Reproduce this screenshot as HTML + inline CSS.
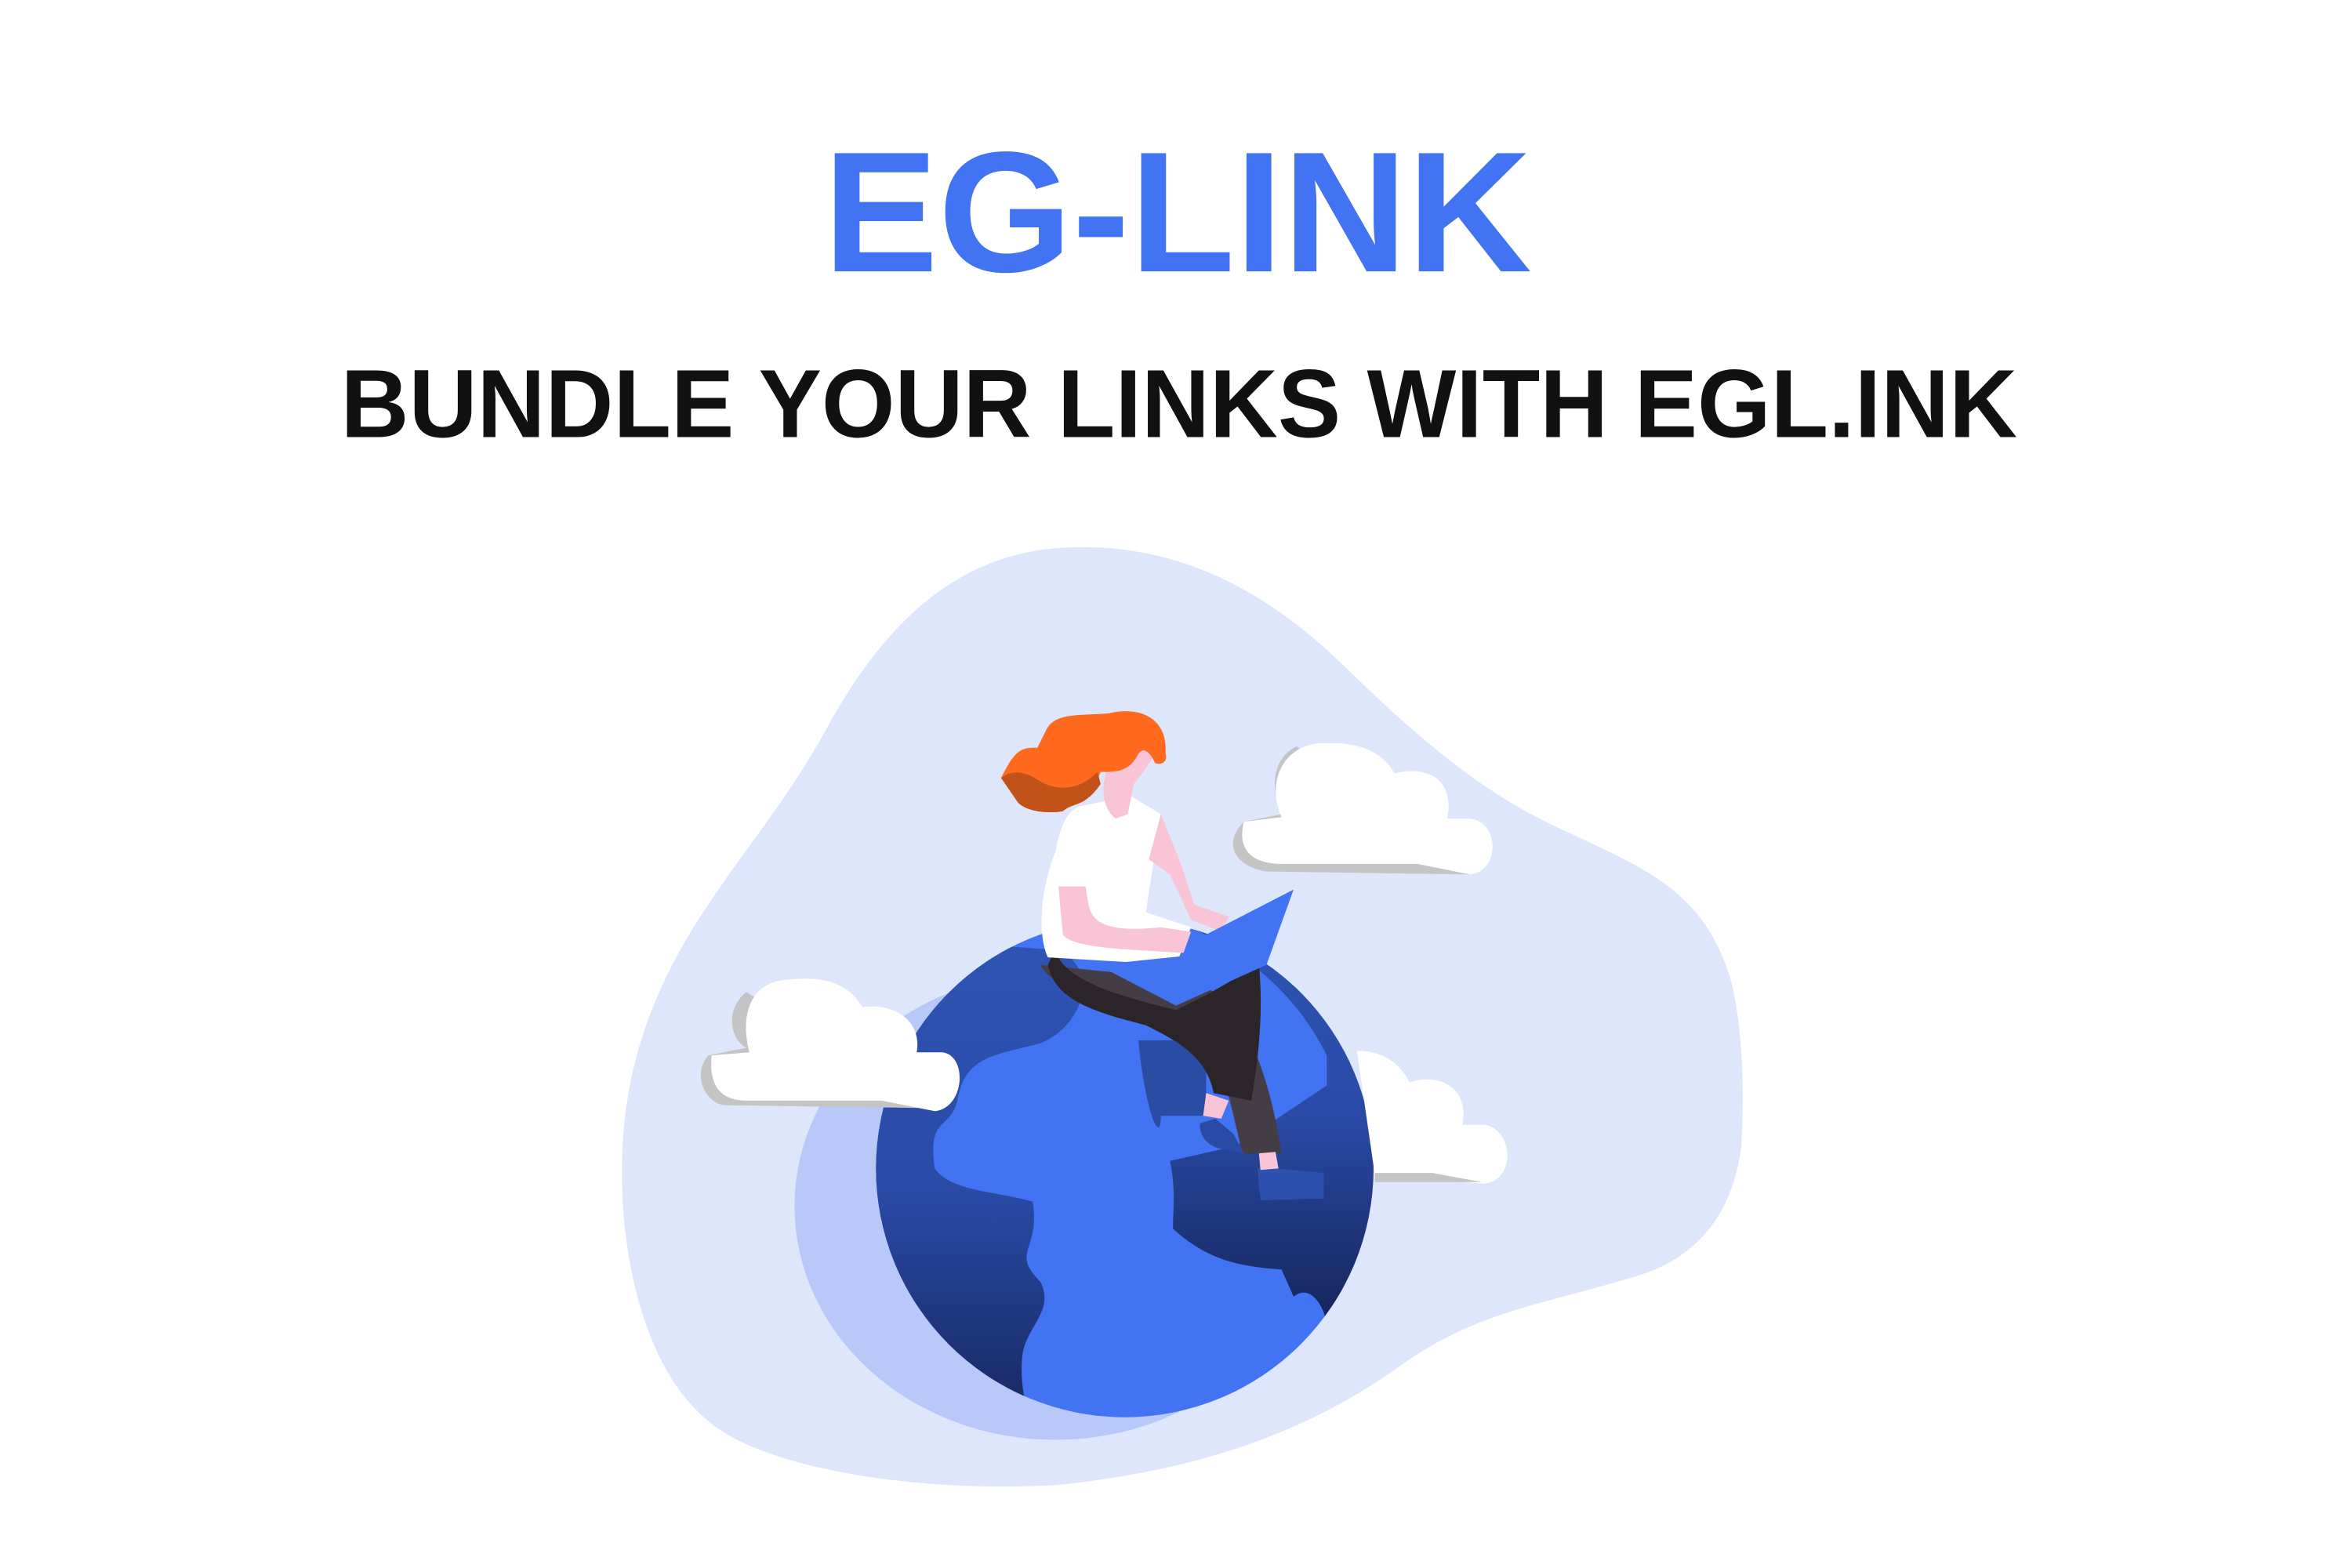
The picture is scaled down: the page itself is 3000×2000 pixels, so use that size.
<!DOCTYPE html>
<html><head><meta charset="utf-8"><style>html,body{margin:0;padding:0;background:#fff;width:3000px;height:2000px;overflow:hidden}svg{display:block}</style></head><body>
<svg width="3000" height="2000" viewBox="0 0 1560 1040" preserveAspectRatio="none" xmlns="http://www.w3.org/2000/svg">
<defs>
<linearGradient id="land" x1="0" y1="0" x2="0" y2="1"><stop offset="0" stop-color="#2f55b4"/><stop offset="0.5" stop-color="#2a4aa6"/><stop offset="1" stop-color="#152459"/></linearGradient>
<clipPath id="gc"><circle cx="746" cy="775" r="165"/></clipPath>
</defs>
<rect width="1560" height="1040" fill="#fff"/>
<text x="546" y="180" font-family="Liberation Sans, sans-serif" font-weight="bold" font-size="114" fill="#4273f2" textLength="470" lengthAdjust="spacingAndGlyphs">EG-LINK</text>
<text x="226" y="290" font-family="Liberation Sans, sans-serif" font-weight="bold" font-size="64" fill="#111" textLength="1112" lengthAdjust="spacingAndGlyphs">BUNDLE YOUR LINKS WITH EGL.INK</text>
<path d="M710 363 C800 360 860 410 900 450 C950 498 990 530 1040 552 C1090 576 1130 590 1148 650 C1158 690 1156 740 1155 760 C1150 800 1130 835 1080 848 C1020 866 980 870 930 905 C870 948 800 975 700 985 C610 990 520 975 480 950 C440 925 420 870 414 810 C408 740 420 680 460 615 C495 560 520 535 550 480 C590 408 640 365 710 363 Z" fill="#dee6fb"/>
<ellipse cx="700" cy="800" rx="173" ry="155" fill="#b8c8f8"/>
<circle cx="746" cy="775" r="165" fill="#4273f2"/>
<g clip-path="url(#gc)" fill="url(#land)">
<path d="M560 620 L700 630 C730 640 720 680 690 692 C660 700 640 700 635 730 C630 750 615 740 620 775 C630 790 660 790 685 797 C690 830 670 830 690 850 C700 870 680 880 678 900 C675 930 690 960 690 960 L560 960 Z"/>
<path d="M760 600 C800 620 850 640 880 700 L880 720 L820 760 L776 770 C780 790 778 800 778 815 C800 835 820 840 850 842 L858 860 C870 850 880 870 880 880 L920 880 L920 600 Z"/>
<path d="M755 690 C760 740 770 760 770 740 L800 740 L800 690 Z" fill="#25428f" opacity="0.8"/>
</g>
<g fill="#c4c4c4"><path d="M495 658 C480 670 485 690 495 695 L470 700 C460 710 465 730 480 733 L620 735 Z"/><path d="M860 495 C840 505 845 530 850 540 L825 545 C810 560 820 575 840 578 L975 580 Z"/></g>
<g fill="#fff">
<path d="M472 700 C470 720 478 730 495 730 L585 730 L620 737 C640 735 642 700 625 698 L608 698 C612 675 590 665 572 668 C560 648 540 648 520 650 C500 652 490 670 497 698 Z"/>
<path d="M825 545 C820 565 832 573 850 573 L940 573 L975 580 C995 578 995 545 975 543 L960 543 C965 515 945 508 925 513 C915 495 895 492 875 493 C850 495 840 520 850 542 Z"/>
<path d="M900 697 C920 697 930 708 935 718 C950 712 975 718 970 746 L985 746 C1005 750 1005 785 983 785 L912 780 Z"/>
</g>
<path d="M912 778 L950 778 L983 784 L912 784 Z" fill="#c4c4c4"/>
<path d="M690 640 C700 660 760 670 770 675 C800 690 808 700 813 720 C820 745 822 760 825 765 L850 765 C840 700 820 660 790 650 Z" fill="#453d46"/>
<path d="M700 630 C705 650 740 660 780 670 L800 660 L835 640 C838 670 835 700 830 730 L805 725 C800 700 780 690 760 680 C730 672 700 665 695 640 Z" fill="#2b2429"/>
<path d="M700 565 C690 590 688 620 695 635 L780 640 L790 615 L760 605 L770 540 L750 528 L715 535 C705 540 702 555 700 565 Z" fill="#fff"/>
<path d="M702 588 L705 620 C712 630 760 630 785 632 L790 618 L770 615 C740 618 725 615 722 600 L720 588 Z" fill="#f8c4d6"/>
<path d="M770 540 L784 575 L792 600 L815 608 L810 618 L790 610 L776 580 L762 570 Z" fill="#f8c4d6"/>
<path d="M728 640 L780 667 L840 640 L858 590 L790 625 L786 634 Z" fill="#4273f2"/>
<path d="M736 505 C730 520 730 535 740 543 L748 540 L752 520 C760 510 768 500 765 495 Z" fill="#f8c4d6"/>
<path d="M664 516 C672 500 676 495 688 496 L694 484 C700 472 718 475 736 473 C758 468 775 478 773 500 C775 505 770 508 766 506 C762 497 757 495 754 502 C748 512 740 512 730 512 L725 524 C720 535 712 532 705 538 C695 540 680 538 675 532 Z" fill="#ff6a1f"/>
<path d="M664 516 C672 510 680 512 688 517 C700 525 715 525 728 512 L730 520 C720 535 712 532 705 538 C695 540 680 538 675 532 Z" fill="#c1531a"/>
<path d="M806 742 L818 752 L825 765 L810 762 C800 760 795 752 796 745 Z" fill="#2a4aa6"/>
<path d="M834 775 L846 775 L878 778 L878 795 L836 796 Z" fill="#2f55b4" opacity="0.8"/>
<path d="M800 725 L798 740 L810 742 L815 730 Z M835 765 L836 776 L848 775 L846 764 Z" fill="#f8c4d6"/>
</svg>
</body></html>
